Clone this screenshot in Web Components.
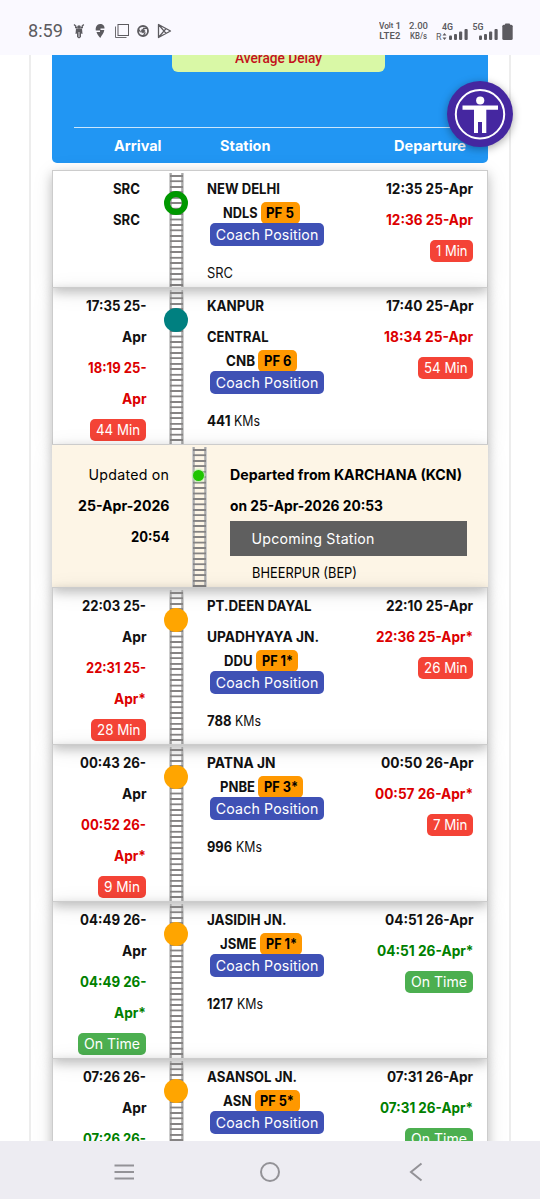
<!DOCTYPE html>
<html lang="en">
<head>
<meta charset="utf-8">
<title>Train Running Status</title>
<style>
    html, body {
        margin: 0;
        height: 1199px;
        overflow: hidden;
        background: #fff;
    }
</style>
</head>
<body>
<train-app></train-app>

<script>
// Single line of text that fills a given width: short text is tracked out, long text is condensed
class FitText extends HTMLElement {
    constructor() {
        super();
        this.attachShadow({ mode: 'open' });
        this.shadowRoot.innerHTML = `
            <style>
                :host { display: inline-block; white-space: nowrap; }
                span { display: inline-block; transform-origin: left center; }
            </style>
            <span><slot></slot></span>
        `;
    }

    connectedCallback() {
        const target = parseFloat(this.getAttribute('w'));
        const count = this.textContent.length;
        if (!target || count < 2) return;
        const span = this.shadowRoot.querySelector('span');
        const natural = span.getBoundingClientRect().width;
        if (natural > target) {
            span.style.transform = `scaleX(${target / natural})`;
        } else {
            span.style.letterSpacing = (target - natural) / (count - 1) + 'px';
        }
        this.style.width = target + 'px';
    }
}

const fit = ([text, width], cls = '') => `<fit-text class="${cls}" w="${width}">${text}</fit-text>`;

class StatusBar extends HTMLElement {
    constructor() {
        super();
        this.attachShadow({ mode: 'open' });
    }

    connectedCallback() {
        this.shadowRoot.innerHTML = `
            <style>
                :host {
                    display: flex;
                    justify-content: space-between;
                    box-sizing: border-box;
                    height: 55px;
                    padding: 20px 27px 0 28px;
                    background: #faf9ff;
                    color: #5c5b60;
                    font-family: Roboto, sans-serif;
                }
                .left, .right { display: flex; height: 22px; align-items: center; }
                .time { font-size: 18.5px; margin-right: 10px; }
                svg { display: block; }
                .pair {
                    display: flex;
                    flex-direction: column;
                    align-items: center;
                    font-size: 9.5px;
                    line-height: 10px;
                    font-weight: 600;
                }
                .volte { margin-right: 8px; }
                .volte div { display: flex; }
                .small { font-size: 7.500px; }
                .speed { margin-right: 7px; font-weight: 500; }
            </style>
            <div class="left">
                ${fit(['8:59', 35], 'time')}
                <svg width="100" height="16" viewBox="0 0 100 16" fill="none" stroke="#5c5b60">
                    <g transform="translate(0 0)">
                        <path d="M1 1.500L3.200 3.500M10.800 1.500L8.800 3.500M2 4.500H4.500M10 4.500H7.500" stroke-width="1.300"/>
                        <circle cx="6" cy="4" r="1.800" fill="#5c5b60" stroke="none"/>
                        <path d="M3 5.500H9L9.500 11L8 10.500V14L6 15.500L4 14V10.500L2.500 11Z" fill="#5c5b60" stroke="none"/>
                        <path d="M6 9V14" stroke="#faf9ff" stroke-width=".8"/>
                    </g>
                    <g transform="translate(22 1)">
                        <path d="M5 0C8 0 9.800 2 9.500 4.500H5.500V6H9.300C9 9 6.500 11.500 5.300 14C3.500 12 2 10 1.500 8H5V6.500H.8C.3 3 2 0 5 0Z" fill="#5c5b60" stroke="none"/>
                    </g>
                    <g stroke-width="1">
                        <rect x="45" y="1.500" width="10.500" height="11"/>
                        <path d="M42.500 3.500V14.500H53.500" stroke-width=".9"/>
                    </g>
                    <g transform="translate(70 8)">
                        <circle r="5" stroke-width="1.800"/>
                        <circle r="2.500" fill="#5c5b60" stroke="#faf9ff" stroke-width=".8"/>
                        <path d="M0 -2.700H5M-2.500 1.300L-4.800 -2.500M2.300 1.400L0 5.300" stroke-width="1.200"/>
                    </g>
                    <path d="M85.500 1.500V14.500L97.500 8ZM85.500 1.500L93 10.400M85.500 14.500L93 5.600" stroke-width="1.300" stroke-linejoin="round"/>
                </svg>
            </div>
            <div class="right">
                <div class="pair volte">
                    <div>${fit(['Vo', 10])}<span class="small">lt</span>&nbsp;<span>1</span></div>
                    ${fit(['LTE2', 21])}
                </div>
                <div class="pair speed">
                    ${fit(['2.00', 19])}
                    ${fit(['KB/s', 17])}
                </div>
                <svg width="78" height="20" viewBox="435 20 78 20" fill="#5c5b60" font-family="Roboto, sans-serif" font-size="9" font-weight="600">
                    <text x="442" y="29" textLength="11" lengthAdjust="spacingAndGlyphs">4G</text>
                    <text x="436" y="39" textLength="5.500" font-weight="400">R</text>
                    <path d="M444.500 32L446.500 34.500H442.500ZM444.500 39L446.500 36.500H442.500Z"/>
                    <rect x="449" y="34.500" width="3" height="4.500" rx="1"/>
                    <rect x="454" y="33" width="3" height="6" rx="1"/>
                    <rect x="459" y="30.500" width="3.200" height="8.500" rx="1"/>
                    <rect x="464.500" y="28" width="3.200" height="11" rx="1"/>
                    <text x="472.500" y="29" textLength="11" lengthAdjust="spacingAndGlyphs">5G</text>
                    <rect x="479" y="34.500" width="3" height="4.500" rx="1"/>
                    <rect x="484" y="33" width="3" height="6" rx="1"/>
                    <rect x="489" y="30.500" width="3.200" height="8.500" rx="1"/>
                    <rect x="494.500" y="28" width="3.200" height="11" rx="1"/>
                    <rect x="505" y="22.500" width="5" height="2" rx=".8"/>
                    <rect x="502.300" y="23.700" width="10.400" height="15.300" rx="1.500"/>
                </svg>
            </div>
        `;
    }
}

class RouteHeader extends HTMLElement {
    constructor() {
        super();
        this.attachShadow({ mode: 'open' });
    }

    connectedCallback() {
        this.shadowRoot.innerHTML = `
            <style>
                :host {
                    display: flex;
                    flex-direction: column;
                    box-sizing: border-box;
                    height: 108px;
                    padding: 0 22px;
                    background: #2196f3;
                    border-radius: 0 0 5px 5px;
                    color: #fff;
                }
                .delay {
                    display: flex;
                    align-items: flex-end;
                    justify-content: center;
                    box-sizing: border-box;
                    align-self: center;
                    width: 213px;
                    height: 17px;
                    padding-bottom: 3px;
                    margin-left: 17px;
                    overflow: hidden;
                    border-radius: 0 0 6px 6px;
                    background: #d9f8a6;
                    color: #c4101c;
                    font: 500 14.500px/20px Roboto, sans-serif;
                }
                .columns {
                    display: grid;
                    grid-template-columns: 106px 1fr auto;
                    margin-top: 55px;
                    padding-left: 40px;
                    border-top: 1px solid #cbe6fc;
                    font: 700 14.500px/35px Inter, sans-serif;
                }
            </style>
            <div class="delay">${fit(['Average Delay', 87])}</div>
            <div class="columns">
                <div>${fit(['Arrival', 47.5])}</div>
                <div>${fit(['Station', 50.5])}</div>
                <div>${fit(['Departure', 72])}</div>
            </div>
        `;
    }
}

// Sleepers and rails, with an optional marker
class RailTrack extends HTMLElement {
    constructor() {
        super();
        this.attachShadow({ mode: 'open' });
    }

    connectedCallback() {
        const kind = this.getAttribute('kind');
        this.shadowRoot.innerHTML = `
            <style>
                :host {
                    display: flex;
                    justify-content: center;
                    width: 15px;
                    margin-top: 2px;
                    margin-bottom: 1px;
                    background:
                        repeating-linear-gradient(180deg, transparent 0 1.700px, #858383 2.200px 3.600px, transparent 4.100px 5.450px) 1px 0 / 13px 100% no-repeat,
                        linear-gradient(90deg, #cdcdcd 0 1px, #a9a9a9 1px 2px, #b9b9b9 2px 3px, transparent 3px 12px, #b9b9b9 12px 13px, #a9a9a9 13px 14px, #cdcdcd 14px);
                }
                .dot {
                    flex: none;
                    box-sizing: border-box;
                    width: 24px;
                    height: 24px;
                    margin-top: 18px;
                    margin-left: -1px;
                    border-radius: 50%;
                }
                .source { border: 6px solid #009800; }
                .passed { background: #008080; }
                .next { background: #ffa500; }
                .live {
                    width: 11px;
                    height: 11px;
                    margin-top: 23px;
                    margin-left: -3px;
                    background: #1fc400;
                    box-shadow: 0 0 2px 1px #b5f0a8;
                }
            </style>
            <div class="dot ${kind}"></div>
        `;
    }
}

class InfoBadge extends HTMLElement {
    constructor() {
        super();
        this.attachShadow({ mode: 'open' });
    }

    connectedCallback() {
        const colors = { late: '#f44336', ontime: '#4caf50', platform: '#ff9800', coach: '#3f51b5' };
        const kind = this.getAttribute('kind');
        this.shadowRoot.innerHTML = `
            <style>
                :host {
                    display: inline-block;
                    box-sizing: border-box;
                    padding: 0 ${kind === 'platform' ? '5.500px' : '5.800px'};
                    height: ${kind === 'coach' ? 23 : 22}px;
                    line-height: ${kind === 'coach' ? 23 : 22}px;
                    border-radius: 5px;
                    background: ${colors[kind]};
                    color: ${kind === 'platform' ? '#000' : '#fff'};
                    font-weight: ${kind === 'platform' ? 700 : 400};
                }
            </style>
            <slot></slot>
        `;
    }
}

class StationRow extends HTMLElement {
    constructor() {
        super();
        this.attachShadow({ mode: 'open' });
    }

    lines(list) {
        return list.map(([text, width, cls = '']) => `<div class="line ${cls}">${fit([text, width])}</div>`).join('');
    }

    badge(b) {
        if (!b) return '';
        const kind = b[0] === 'On Time' ? 'ontime' : 'late';
        return `<div class="line"><info-badge kind="${kind}">${fit(b)}</info-badge></div>`;
    }

    distance(s) {
        if (s.source) return `<div class="line distance">${fit(['SRC', 26])}</div>`;
        if (!s.km) return '';
        return `<div class="line distance"><b>${fit(s.km)}</b>${fit(['KMs', 26])}</div>`;
    }

    connectedCallback() {
        const s = this.station;
        this.shadowRoot.innerHTML = `
            <style>
                :host {
                    display: grid;
                    grid-template-columns: 93px 15px 118px 1fr;
                    column-gap: 23px;
                    box-sizing: border-box;
                    height: ${s.height}px;
                    padding-right: 14px;
                    border: 1px solid #ccc;
                    box-shadow: 0 4px 10px 0 rgba(0, 0, 0, .2), 0 4px 20px 0 rgba(0, 0, 0, .1);
                    font: 700 14.200px/31px Inter, sans-serif;
                    color: #111;
                }
                .arrival, .departure, .station { padding-top: 2px; }
                .arrival, .departure { text-align: right; }
                .line { height: 31px; white-space: nowrap; }
                .line info-badge { vertical-align: top; margin-top: 4.500px; }
                .source .line { padding-right: 6px; }
                .red { color: #dc0000; }
                .green { color: #008000; }
                .station { margin-left: -.5px; }
                .code {
                    display: flex;
                    justify-content: center;
                    gap: 3.500px;
                    height: 22px;
                    margin-top: -2.500px;
                    padding-right: 9px;
                    line-height: 22px;
                }
                .coach { height: 23px; margin-left: 3.500px; margin-top: -.5px; line-height: 23px; }
                .coach info-badge { vertical-align: top; }
                .distance { display: flex; gap: 4px; margin-top: 10.500px; font-weight: 400; }
                .distance b { font-weight: 700; }
            </style>
            <div class="arrival ${s.source ? 'source' : ''}">${this.lines(s.arrival)}${this.badge(s.arrivalBadge)}</div>
            <rail-track kind="${s.kind}"></rail-track>
            <div class="station">
                ${this.lines(s.name)}
                <div class="code">${fit(s.code)}<info-badge kind="platform">${fit(s.platform)}</info-badge></div>
                <div class="coach"><info-badge kind="coach">${fit(['Coach Position', 102.5])}</info-badge></div>
                ${this.distance(s)}
            </div>
            <div class="departure">${this.lines(s.departure)}${this.badge(s.departureBadge)}</div>
        `;
    }
}

class LiveUpdate extends HTMLElement {
    constructor() {
        super();
        this.attachShadow({ mode: 'open' });
    }

    connectedCallback() {
        this.shadowRoot.innerHTML = `
            <style>
                :host {
                    display: grid;
                    grid-template-columns: 117px 15px 237px;
                    grid-template-rows: 143px;
                    column-gap: 23px;
                    box-sizing: border-box;
                    height: 144px;
                    margin-bottom: -1px;
                    border-top: 1px solid #ccc;
                    background: #fdf5e6;
                    box-shadow: 0 4px 10px 0 rgba(0, 0, 0, .2), 0 4px 20px 0 rgba(0, 0, 0, .1);
                    font: 700 14.200px/30.700px Inter, sans-serif;
                    color: #000;
                }
                .when { text-align: right; padding-top: 15.400px; }
                .what { margin-left: -.5px; padding-top: 15.400px; }
                .line { height: 30.700px; white-space: nowrap; }
                .plain { font-weight: 400; }
                .upcoming {
                    height: 35.500px;
                    margin-top: -1px;
                    padding-left: 22px;
                    background: #5f5f5f;
                    color: #fff;
                    font-weight: 400;
                    line-height: 36px;
                }
                .next { padding-left: 22px; font-weight: 400; line-height: 34px; }
            </style>
            <div class="when">
                <div class="line plain">${fit(['Updated on', 80.5])}</div>
                <div class="line">${fit(['25-Apr-2026', 91.5])}</div>
                <div class="line">${fit(['20:54', 38.5])}</div>
            </div>
            <rail-track kind="live"></rail-track>
            <div class="what">
                <div class="line">${fit(['Departed from KARCHANA (KCN)', 232])}</div>
                <div class="line">${fit(['on 25-Apr-2026 20:53', 153])}</div>
                <div class="upcoming">${fit(['Upcoming Station', 123])}</div>
                <div class="next">${fit(['BHEERPUR (BEP)', 105])}</div>
            </div>
        `;
    }
}

class AccessibilityButton extends HTMLElement {
    constructor() {
        super();
        this.attachShadow({ mode: 'open' });
        this.shadowRoot.innerHTML = `
            <style>
                :host {
                    display: block;
                    width: 66px;
                    height: 66px;
                    border-radius: 50%;
                    background: #4527a0;
                    box-shadow: 0 2px 8px rgba(0, 0, 0, .35);
                }
            </style>
            <svg width="66" height="66" viewBox="0 0 66 66" fill="#fff">
                <circle cx="33" cy="33.300" r="24.200" fill="none" stroke="#fff" stroke-width="2"/>
                <circle cx="33.200" cy="19.500" r="4.100"/>
                <path d="M15.500 24.500H51V28.800H39.300V52H35V41H31V52H27V28.800H15.500Z"/>
            </svg>
        `;
    }
}

class NavBar extends HTMLElement {
    constructor() {
        super();
        this.attachShadow({ mode: 'open' });
        this.shadowRoot.innerHTML = `
            <style>
                :host {
                    display: flex;
                    align-items: center;
                    justify-content: space-between;
                    box-sizing: border-box;
                    height: 58px;
                    padding: 3px 112px 0;
                    background: #edecf2;
                }
            </style>
            <svg width="24" height="24" fill="none" stroke="#939297" stroke-width="2"><path d="M2.500 5.500H22M2.500 12H22M2.500 18.500H22"/></svg>
            <svg width="24" height="24" fill="none" stroke="#939297" stroke-width="2"><circle cx="12" cy="12" r="9"/></svg>
            <svg width="24" height="24" fill="none" stroke="#939297" stroke-width="2"><path d="M17.500 3.500L7 12L17.500 20.500"/></svg>
        `;
    }
}

const STATIONS = [
    {
        height: 118, kind: 'source', source: true,
        arrival: [['SRC', 27], ['SRC', 27]],
        name: [['NEW DELHI', 73]], code: ['NDLS', 34.5], platform: ['PF 5', 28],
        departure: [['12:35 25-Apr', 87], ['12:36 25-Apr', 87, 'red']], departureBadge: ['1 Min', 31.5]
    },
    {
        height: 158, kind: 'passed',
        arrival: [['17:35 25-', 60.5], ['Apr', 24.5], ['18:19 25-', 58.5, 'red'], ['Apr', 24.5, 'red']], arrivalBadge: ['44 Min', 44],
        name: [['KANPUR', 57], ['CENTRAL', 61.5]], code: ['CNB', 29], platform: ['PF 6', 27.5], km: ['441', 23.5],
        departure: [['17:40 25-Apr', 87.5], ['18:34 25-Apr', 89, 'red']], departureBadge: ['54 Min', 43.5]
    },
    null,
    {
        height: 158, kind: 'next',
        arrival: [['22:03 25-', 64], ['Apr', 24.5], ['22:31 25-', 60, 'red'], ['Apr*', 32, 'red']], arrivalBadge: ['28 Min', 43.5],
        name: [['PT.DEEN DAYAL', 104.5], ['UPADHYAYA JN.', 112]], code: ['DDU', 28.5], platform: ['PF 1*', 31], km: ['788', 24.5],
        departure: [['22:10 25-Apr', 87], ['22:36 25-Apr*', 97, 'red']], departureBadge: ['26 Min', 43.5]
    },
    {
        height: 158, kind: 'next',
        arrival: [['00:43 26-', 66], ['Apr', 24.5], ['00:52 26-', 65, 'red'], ['Apr*', 32, 'red']], arrivalBadge: ['9 Min', 36],
        name: [['PATNA JN', 68.5]], code: ['PNBE', 35], platform: ['PF 3*', 34], km: ['996', 25],
        departure: [['00:50 26-Apr', 92.5], ['00:57 26-Apr*', 98, 'red']], departureBadge: ['7 Min', 34.5]
    },
    {
        height: 158, kind: 'next',
        arrival: [['04:49 26-', 66.5], ['Apr', 24.5], ['04:49 26-', 66.5, 'green'], ['Apr*', 32, 'green']], arrivalBadge: ['On Time', 56],
        name: [['JASIDIH JN.', 79.5]], code: ['JSME', 36.5], platform: ['PF 1*', 31], km: ['1217', 26],
        departure: [['04:51 26-Apr', 88.5], ['04:51 26-Apr*', 96.5, 'green']], departureBadge: ['On Time', 56]
    },
    {
        height: 158, kind: 'next',
        arrival: [['07:26 26-', 63], ['Apr', 24.5], ['07:26 26-', 63, 'green']],
        name: [['ASANSOL JN.', 90]], code: ['ASN', 28.5], platform: ['PF 5*', 34],
        departure: [['07:31 26-Apr', 86], ['07:31 26-Apr*', 93, 'green']], departureBadge: ['On Time', 56]
    }
];

class TrainApp extends HTMLElement {
    constructor() {
        super();
        this.attachShadow({ mode: 'open' });
    }

    connectedCallback() {
        this.shadowRoot.innerHTML = `
            <style>
                :host {
                    display: flex;
                    flex-direction: column;
                    width: 540px;
                    height: 1199px;
                }
                main {
                    flex: 1;
                    min-height: 0;
                    overflow: hidden;
                    box-sizing: border-box;
                    margin: 0 29px;
                    padding: 0 21px;
                    border: 2px solid #ededed;
                    border-width: 0 2px;
                }
                .rows {
                    display: flex;
                    flex-direction: column;
                    margin-top: 7px;
                }
                station-row { margin-bottom: -1px; flex: none; }
                live-update { flex: none; }
                accessibility-button {
                    position: absolute;
                    left: 447px;
                    top: 81px;
                }
            </style>
            <status-bar></status-bar>
            <main>
                <route-header></route-header>
                <div class="rows"></div>
            </main>
            <nav-bar></nav-bar>
            <accessibility-button></accessibility-button>
        `;
        const rows = this.shadowRoot.querySelector('.rows');
        STATIONS.forEach(station => {
            const row = document.createElement(station ? 'station-row' : 'live-update');
            row.station = station;
            rows.appendChild(row);
        });
    }
}

customElements.define('fit-text', FitText);
customElements.define('info-badge', InfoBadge);
customElements.define('rail-track', RailTrack);
customElements.define('status-bar', StatusBar);
customElements.define('route-header', RouteHeader);
customElements.define('station-row', StationRow);
customElements.define('live-update', LiveUpdate);
customElements.define('accessibility-button', AccessibilityButton);
customElements.define('nav-bar', NavBar);
customElements.define('train-app', TrainApp);
</script>
</body>
</html>
